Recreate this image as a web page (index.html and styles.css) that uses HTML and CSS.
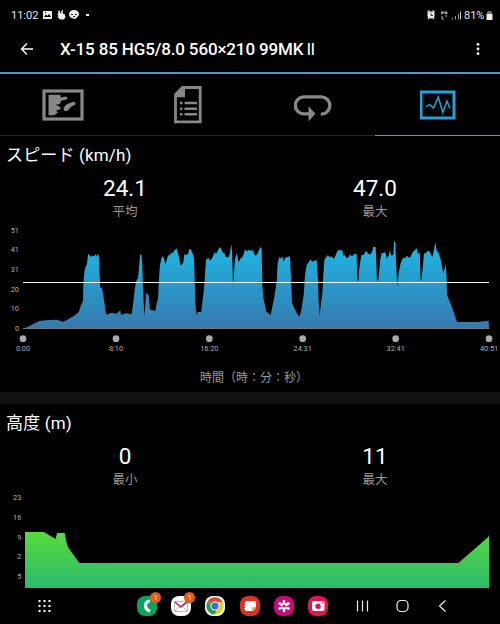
FILE: index.html
```
<!DOCTYPE html>
<html lang="ja">

<head>
    <meta charset="UTF-8">
    <meta name="viewport" content="width=device-width, initial-scale=1.0">
    <title>X-15 85 HG5/8.0 560×210 99MK II</title>
    <link rel="stylesheet" href="styles.css">
</head>

<body>
    <div class="status">
        <span class="clock">11:02</span>
        <svg class="notice" width="50" height="12" viewBox="0 0 50 12">
            <path fill="#eee" fill-rule="evenodd" d="M1 2h9v8H1zM2 8h7L7 5 5.500 7 4 5.500zM3 3v1h1V3z" />
            <path fill="#eee" d="M16 2l1.500-.5 1 3L20 1l1 .5-.5 3 2 .5 1 3-1.500 2.500h-4L15.500 8l1-1-1.500-2 1.500-.5z" />
            <path fill="#eee" d="M32 1c3 0 5 1.800 5 4.200 0 2.300-3 4-5 5.300V9.400c-3 0-5-1.800-5-4.200S29 1 32 1z" />
            <path stroke="#222" fill="none" d="M29 5.500h2M33 5.500h2M31 7.500h2" />
            <path fill="#eee" d="M44 5h3v2h-3z" />
        </svg>
        <svg class="signals" width="36" height="12" viewBox="0 0 36 12">
            <circle cx="5" cy="6" r="3.600" fill="#eee" />
            <path d="M1.500 3.500l2-2M8.500 3.500l-2-2M2 10l1-1M8 10l-1-1" stroke="#eee" stroke-width="1.300" />
            <path d="M5 4v2.500h2" stroke="#000" fill="none" stroke-width=".8" />
            <path d="M15.500 5.500V2.800h2V4h-2M19 5V3h2v1.500h-2M16 7v3h2M19 7h2" stroke="#bbb" fill="none" />
            <path d="M26.500 9v1.500M29.500 7v3.500M32.500 5v5.500" stroke="#999" stroke-width="1" />
            <path d="M34.500 2.500v8" stroke="#ccc" stroke-width="1" />
        </svg>
        <span class="percent">81%</span>
        <svg width="7" height="11" viewBox="0 0 7 11">
            <path fill="#777" d="M2 1h3v1h1v2H1V2h1z" />
            <path fill="#eee" d="M.5 4h6v6h-6z" />
        </svg>
    </div>

    <div class="header">
        <svg class="back" width="14" height="14" viewBox="0 0 14 14">
            <path d="M13 7H2M7 1.500L1.500 7 7 12.500" fill="none" stroke="#fff" stroke-width="1.400" />
        </svg>
        <h1>X-15 85 HG5/8.0 560×210 99MK <span class="mark">II</span></h1>
        <svg width="4" height="14" viewBox="0 0 4 14" fill="#fff">
            <circle cx="2" cy="2.300" r="1.400" />
            <circle cx="2" cy="7" r="1.400" />
            <circle cx="2" cy="11.700" r="1.400" />
        </svg>
    </div>

    <div class="tab">
        <button class="tablinks">
            <svg width="42" height="38" viewBox="0 0 42 38">
                <rect x="2" y="5" width="38" height="28" fill="none" stroke="#888" stroke-width="3.200" />
                <g transform="translate(-41.500 -13.500) scale(.3333)" fill="#888">
                    <path d="M144 67H180V75L196 72Q203 74 200 80L182 85 178 95 166 96 180 104V110L167 114 172 121 160 128H144Z" />
                    <path d="M189 112Q190 99 203 94L218 88Q227 89 225 96L212 103 202 114Q192 118 189 112Z" />
                </g>
            </svg>
        </button>
        <button class="tablinks">
            <svg width="28" height="38" viewBox="0 0 28 38">
                <path fill="none" stroke="#888" stroke-width="2.800" d="M8.500 1.500h17.700v34.300H1.500V8.500z" />
                <path fill="#888" d="M8 .5h3v10.700H1V7.500z" />
                <path stroke="#888" stroke-width="2.600" d="M6 17h2.500M10.500 17H23M6 22.700h2.500M10.500 22.700H23M6 28.200h2.500M10.500 28.200H23" />
            </svg>
        </button>
        <button class="tablinks">
            <svg width="38" height="38" viewBox="0 0 38 38">
                <g transform="translate(-43.500 -13.500) scale(.3333)">
                    <path fill="none" stroke="#888" stroke-width="10" d="M176 124H160A25.500 25.500 0 0 1 160 73H213A25.500 25.500 0 0 1 211 125" />
                    <path fill="#888" d="M174 101V146L195 123.500Z" />
                </g>
            </svg>
        </button>
        <button class="tablinks active">
            <svg width="36" height="38" viewBox="0 0 36 38">
                <rect x="1" y="6" width="33" height="26" fill="none" stroke="#24a0da" stroke-width="3" />
                <path fill="none" stroke="#24a0da" stroke-width="1.500" d="M6 21l3.500-2.500L13.500 22 18.300 11l4.500 15.500L27 15l3 7.500" />
            </svg>
        </button>
    </div>

    <div class="section speed">
        <h2>スピード (km/h)</h2>
        <dl>
            <div>
                <dd>24.1</dd>
                <dt>平均</dt>
            </div>
            <div>
                <dd>47.0</dd>
                <dt>最大</dt>
            </div>
        </dl>
        <svg class="chart" width="500" height="135" viewBox="0 0 1500 405">
            <defs>
                <linearGradient id="blue" gradientUnits="userSpaceOnUse" x1="0" y1="50" x2="0" y2="311">
                    <stop offset="0" stop-color="#1db9e6" />
                    <stop offset="1" stop-color="#3778ad" />
                </linearGradient>
            </defs>
            <path fill="url(#blue)" d="M69 311L80 307 100 297 118 288 145 285 170 284 187 290 197 287 210 279 222 272 236 262 242 243 249 228 250 180 253 140 257 124 261 118 264 86 268 90 273 96 279 92 283 94 287 87 290 95 293 86 296 90 299 150 301 188 306 190 310 212 314 238 318 266 322 269 331 264 342 264 348 267 361 256 363 270 378 265 395 267 399 240 404 195 408 170 414 158 417 130 420 91 424 87 427 120 429 190 433 272 436 240 438 206 442 205 446 214 450 254 466 258 470 235 474 222 477 160 480 120
            484 102 488 93 492 99 496 119 500 106 504 91 510 91 513 82 516 86 522 78 530 70 534 86 538 100 541 120 545 121 550 110 553 88 560 90 565 85 568 72 573 74 577 83 582 100 584 160 586 235 589 270 592 262 604 260 607 230 611 200 614 165 618 105 625 98 630 107 637 98 644 82 648 86 652 80 656 72 660 66 664 72 667 82 673 84 677 96 686 97 689 86 694 58 696 80 699 170 701 170 704 110 709 85 712 92 716 112 722 100 728 96 735 74 742 79 746 75 755 78 758 73 761 84 766 92 772 88 777 75 782 66 785 72 787 180 790 218 794 236 799 260 804 263 812 270 816 250 823 215 830 170 833 115 838 96 843 101 847 94 851 110 856 98 870 94 873 160 876 234 883 250 890 264 898 275 903 260 907 235 911 210 915 150 920 120 926 112 931 103 936 110 950 105 954 165 956 230 959 271 963 235 967 205 969 165 973 105 977 98 983 91
            990 97 995 94 999 100 1003 100 1008 88 1014 76 1027 76 1030 94 1034 90 1040 99 1046 96 1050 88 1054 93 1059 92 1063 87 1068 88 1070 85 1072 168 1075 168 1078 130 1082 102 1085 90 1091 90 1095 82 1100 78 1104 87 1112 88 1117 78 1120 65 1127 67 1129 110 1131 170 1135 165 1141 102 1145 85 1156 82 1161 101 1166 92 1169 76 1174 92 1180 90 1182 50 1186 50 1188 110 1192 185 1196 145 1202 115 1209 98 1215 100 1220 93 1230 98 1238 82 1244 76 1250 70 1254 88 1259 80 1262 168 1265 160 1272 86 1280 82 1286 76 1292 86 1297 97 1302 75 1306 52 1311 82 1315 82 1321 100 1325 120 1330 144 1334 130 1337 116 1340 160 1341 210 1350 232 1360 258 1371 291 1430 291 1466 287 1467 311Z" />
            <path d="M69 310.500H1467" stroke="#777" stroke-width="3" />
            <path d="M69 172.500H1467" stroke="#f6f6ee" stroke-width="3" />
            <g class="ylabel">
                <text x="57" y="23">51</text>
                <text x="57" y="81">41</text>
                <text x="57" y="141">31</text>
                <text x="57" y="200">20</text>
                <text x="57" y="259">10</text>
                <text x="57" y="318">0</text>
            </g>
            <g fill="#aaa">
                <circle cx="69" cy="341" r="10" />
                <circle cx="348" cy="341" r="10" />
                <circle cx="628" cy="341" r="10" />
                <circle cx="908" cy="341" r="10" />
                <circle cx="1187" cy="341" r="10" />
                <circle cx="1467" cy="341" r="10" />
            </g>
            <g class="xlabel">
                <text x="69" y="378">0:00</text>
                <text x="348" y="378">8:10</text>
                <text x="628" y="378">16:20</text>
                <text x="908" y="378">24:31</text>
                <text x="1187" y="378">32:41</text>
                <text x="1467" y="378">40:51</text>
            </g>
        </svg>
        <p class="caption">時間（時：分：秒）</p>
    </div>

    <div class="section altitude">
        <h2>高度 (m)</h2>
        <dl>
            <div>
                <dd>0</dd>
                <dt>最小</dt>
            </div>
            <div>
                <dd>11</dd>
                <dt>最大</dt>
            </div>
        </dl>
        <svg class="chart" width="500" height="95" viewBox="0 0 1500 285">
            <defs>
                <linearGradient id="green" x1="0" y1="0" x2="0" y2="1">
                    <stop offset="0" stop-color="#58db3c" />
                    <stop offset="1" stop-color="#2bb86d" />
                </linearGradient>
            </defs>
            <path fill="url(#green)" d="M75 285V117H131L167 138 171 120H194L199 146 204 163 238 210H1375L1464 133 1467 126V285Z" />
            <g class="ylabel">
                <text x="64" y="22">23</text>
                <text x="64" y="81">16</text>
                <text x="64" y="140">9</text>
                <text x="64" y="198">2</text>
                <text x="64" y="258">5</text>
            </g>
        </svg>
    </div>

    <div class="navbar">
        <svg class="grid" width="13" height="12" viewBox="0 0 13 12">
            <path stroke="#fff" stroke-width="2" stroke-dasharray="2 3" d="M.5 1h12M.5 6h12M.5 11h12" />
        </svg>
        <div class="apps">
            <div class="app phone">
                <svg viewBox="0 0 20 20"><path fill="none" stroke="#fff" stroke-width="3.200" d="M12.800 5Q8.500 5.500 8.500 9.500T13 15.200" /></svg>
                <span class="badge">1</span>
            </div>
            <div class="app mail">
                <svg viewBox="0 0 20 20"><path fill="none" stroke="#bbb" d="M3.500 5.500h13v10h-13zM3.500 15.500l5-5M16.500 15.500l-5-5" /><path fill="none" stroke="#b22a50" stroke-width="1.600" d="M4 6l5.500 5L16 6" /></svg>
                <span class="badge">1</span>
            </div>
            <div class="app">
                <svg viewBox="0 0 20 20">
                    <rect width="20" height="20" rx="8" fill="#fff" />
                    <path fill="#dc4735" d="M10 10L2.600 5.500A8.500 8.500 0 0 1 17.500 6z" />
                    <path fill="#f6c52f" d="M10 10V6h7.500A8.500 8.500 0 0 1 9.500 18.500L13 12z" />
                    <path fill="#339b50" d="M10 10l3 2-3.500 6.500A8.500 8.500 0 0 1 2.600 5.500z" />
                    <circle cx="10" cy="10" r="4.500" fill="#fff" />
                    <circle cx="10" cy="10" r="3.600" fill="#2f72d8" />
                </svg>
            </div>
            <div class="app notes">
                <svg viewBox="0 0 20 20"><path fill="#fff" d="M5 5h11v6.500h-3.500V15H5v-2H4v-1h1v-1.500H4v-1h1V8H4V7h1z" /><path fill="#ffc1b8" d="M13 12.200h3L13 15z" /></svg>
            </div>
            <div class="app gallery">
                <svg viewBox="0 0 20 20"><path stroke="#fff" stroke-width="2.600" stroke-linecap="round" d="M10 5v10M5.500 7.500l9 5M14.500 7.500l-9 5" /><circle cx="10" cy="10" r="1.500" fill="#c8087b" /></svg>
            </div>
            <div class="app camera">
                <svg viewBox="0 0 20 20"><rect x="4" y="5" width="12.500" height="10" rx="2" fill="#fff" /><circle cx="10" cy="10.200" r="2.700" fill="#e0174f" /><circle cx="14.300" cy="7" r=".8" fill="#e0174f" /></svg>
            </div>
        </div>
        <svg class="keys" width="92" height="14" viewBox="0 0 92 14" fill="none" stroke="#eee" stroke-width="1.200">
            <path d="M1.500 1.500v11M6.500 1.500v11M11.500 1.500v11" />
            <rect x="41" y="1.500" width="11" height="11" rx="4" />
            <path d="M89.500 1.500L83.500 7l6 5.500" />
        </svg>
    </div>
</body>

</html>
```
FILE: styles.css
```
* {
    box-sizing: border-box;
}

body {
    margin: 0;
    height: 624px;
    overflow: hidden;
    background-color: #000;
    color: #fff;
    font-family: Roboto, "Noto Sans CJK JP", sans-serif;
}

svg {
    display: block;
    flex-shrink: 0;
}

.status {
    display: flex;
    align-items: center;
    height: 30px;
    padding: 0 7px 0 11px;
    font-size: 11px;
    color: #e4e4e4;
}

.clock {
    width: 31px;
}

.signals {
    margin-left: auto;
}

.percent {
    width: 22px;
    margin: 0 0 0 2px;
}

.header {
    display: flex;
    align-items: center;
    height: 44px;
    padding: 0 20px 5px;
    border-bottom: 2px solid #4a9cc2;
}

.header h1 {
    flex: 1;
    margin: 0 0 0 26px;
    font-size: 17px;
    font-weight: 500;
    letter-spacing: -0.14px;
    white-space: nowrap;
}

.mark {
    margin-left: -1px;
    font-weight: 400;
    letter-spacing: -0.5px;
}

.tab {
    display: flex;
    height: 62px;
}

.tab button {
    flex: 1;
    display: flex;
    align-items: center;
    justify-content: center;
    padding: 0;
    background-color: inherit;
    border: none;
    border-bottom: 1px solid #242424;
    cursor: pointer;
}

.tab button.active {
    border-color: #6e8fd0;
}

.section {
    padding-top: 7px;
    overflow: hidden;
}

.speed {
    height: 256px;
}

.altitude {
    height: 196px;
    border-top: 12px solid #111;
}

h2 {
    margin: 0;
    padding-left: 6px;
    height: 24px;
    font-size: 17px;
    font-weight: 400;
    line-height: 24px;
    letter-spacing: 0.15px;
}

dl {
    display: flex;
    height: 58px;
    margin: 0;
    padding-top: 7px;
    text-align: center;
}

dl div {
    flex: 1;
}

dd {
    margin: 0;
    height: 28px;
    font-size: 22.5px;
    line-height: 28px;
}

dt {
    color: #999;
    font-size: 12.5px;
    line-height: 20px;
}

.ylabel,
.xlabel {
    font-size: 22px;
    fill: #b0b0b0;
}

.ylabel {
    text-anchor: end;
}

.xlabel {
    text-anchor: middle;
}

.caption {
    margin: 9px 0 0;
    padding-left: 8px;
    color: #999;
    font-size: 12px;
    line-height: 18px;
    text-align: center;
}

.navbar {
    display: flex;
    align-items: center;
    height: 36px;
    padding-left: 38px;
}

.apps {
    display: flex;
    gap: 14.2px;
    margin-left: 86px;
}

.app {
    position: relative;
    width: 20px;
    height: 20px;
    border-radius: 8px;
}

.phone {
    background-color: #09a261;
}

.mail {
    background-color: #fff;
}

.notes {
    background-color: #dd3028;
}

.gallery {
    background-color: #c8087b;
}

.camera {
    background-color: #e0174f;
}

.badge {
    position: absolute;
    top: -4px;
    right: -4px;
    width: 11px;
    height: 11px;
    border-radius: 50%;
    background-color: #e75b1d;
    font-size: 8px;
    line-height: 11px;
    text-align: center;
}

.keys {
    margin-left: 28px;
}
```
